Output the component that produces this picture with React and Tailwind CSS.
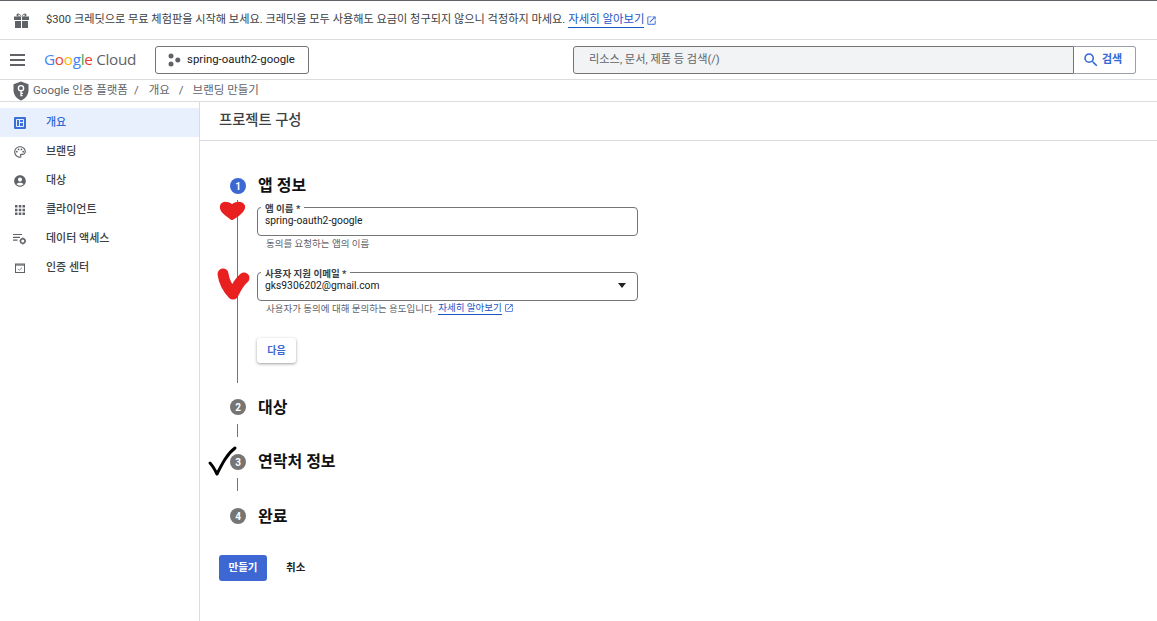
const FONT = 'font-["Roboto","Noto_Sans_CJK_KR",sans-serif]'

function OpenIcon({ className }) {
  return (
    <svg className={className} viewBox="0 0 24 24" fill="currentColor">
      <path d="M19 19H5V5h7V3H5a2 2 0 0 0-2 2v14a2 2 0 0 0 2 2h14c1.100 0 2-.900 2-2v-7h-2v7zM14 3v2h3.590l-9.830 9.830 1.410 1.410L19 6.410V10h2V3h-7z" />
    </svg>
  )
}

function SearchIcon() {
  return (
    <svg className="w-[18px] h-[18px] shrink-0" viewBox="0 0 24 24" fill="currentColor">
      <path d="M15.500 14h-.790l-.280-.270A6.470 6.470 0 0 0 16 9.500 6.500 6.500 0 1 0 9.500 16c1.610 0 3.090-.590 4.230-1.570l.270.280v.790l5 4.990L20.490 19l-4.990-5zm-6 0C7.010 14 5 11.990 5 9.500S7.010 5 9.500 5 14 7.010 14 9.500 11.990 14 9.500 14z" />
    </svg>
  )
}

function GiftIcon() {
  return (
    <svg className="w-[15px] h-[15px] text-[#5f6368]" viewBox="0 0 15 15" fill="currentColor">
      <path d="M0 3.500h7v3.600H0zM8 3.500h7v3.600H8zM1 8h6v7H1zM8 8h6v7H8z" />
      <path d="M7.500 3.500C6.300 1.200 5.300.500 4.200.500 3.100.500 2.500 1.300 2.500 2.100c0 .600.300 1.100.800 1.400h3v-.100c-.800-.200-2.200-.500-2.200-1.300 0-.300.200-.600.500-.600.800 0 1.700 1.100 2.400 2zm0 0C8.700 1.200 9.700.500 10.800.500c1.100 0 1.700.800 1.700 1.600 0 .600-.300 1.100-.800 1.400h-3v-.100c.800-.200 2.200-.500 2.200-1.300 0-.300-.200-.600-.500-.600-.800 0-1.700 1.100-2.400 2z" />
    </svg>
  )
}

function ShieldIcon() {
  return (
    <svg className="w-[18px] h-[20px] shrink-0" viewBox="0 0 18 20">
      <path d="M9 0.500 16.500 3.200V9c0 4.800-3.100 8.800-7.500 10.400C4.600 17.800 1.500 13.800 1.500 9V3.200z" fill="#5f6368" />
      <circle cx="9" cy="7.200" r="2.600" fill="none" stroke="#fff" strokeWidth="1.400" />
      <path d="M9 9.800v5.400M9 12.400h2M9 14.600h1.600" stroke="#fff" strokeWidth="1.300" fill="none" />
    </svg>
  )
}

function ProjectIcon() {
  return (
    <svg className="w-[14px] h-[14px]" viewBox="0 0 14 14" fill="#5f6368">
      <circle cx="4" cy="3" r="2.500" />
      <circle cx="4" cy="11" r="2.500" />
      <circle cx="10.800" cy="7" r="2.500" />
    </svg>
  )
}

function OverviewIcon() {
  return (
    <svg className="w-[12px] h-[12px]" viewBox="0 0 12 12">
      <rect width="12" height="12" rx="1" fill="#3d6fd8" />
      <path d="M2.500 2.500h7v7h-7zM5.500 2.500v7M5.500 5.500h4" fill="none" stroke="#e8f0fe" strokeWidth="1" />
    </svg>
  )
}

function PaletteIcon() {
  return (
    <svg className="w-[14px] h-[14px]" viewBox="0 0 24 24" fill="#5f6368">
      <path d="M12 22C6.490 22 2 17.510 2 12S6.490 2 12 2s10 4.040 10 9c0 3.310-2.690 6-6 6h-1.770c-.280 0-.500.220-.500.500 0 .120.050.230.130.330.410.470.640 1.060.640 1.670A2.500 2.500 0 0 1 12 22zm0-18c-4.410 0-8 3.590-8 8s3.590 8 8 8c.280 0 .500-.220.500-.500a.540.540 0 0 0-.140-.350c-.410-.460-.630-1.050-.630-1.650a2.500 2.500 0 0 1 2.500-2.500H16c2.210 0 4-1.790 4-4 0-3.860-3.590-7-8-7z" />
      <circle cx="6.500" cy="11.500" r="1.500" />
      <circle cx="9.500" cy="7.500" r="1.500" />
      <circle cx="14.500" cy="7.500" r="1.500" />
      <circle cx="17.500" cy="11.500" r="1.500" />
    </svg>
  )
}

function AudienceIcon() {
  return (
    <svg className="w-[14px] h-[14px]" viewBox="0 0 24 24" fill="#5f6368">
      <path d="M12 2C6.480 2 2 6.480 2 12s4.480 10 10 10 10-4.480 10-10S17.520 2 12 2zm0 4c1.930 0 3.500 1.570 3.500 3.500S13.930 13 12 13s-3.500-1.570-3.500-3.500S10.070 6 12 6zm0 14c-2.030 0-4.430-.820-6.140-2.880C7.550 15.800 9.680 15 12 15s4.450.800 6.140 2.120C16.430 19.180 14.030 20 12 20z" />
    </svg>
  )
}

function ClientsIcon() {
  return (
    <svg className="w-[12px] h-[12px]" viewBox="0 0 12 12" fill="#5f6368">
      <path d="M1 1h2.500v2.500H1zM4.800 1h2.500v2.500H4.800zM8.500 1H11v2.500H8.500zM1 4.800h2.500v2.500H1zM4.800 4.800h2.500v2.500H4.800zM8.500 4.800H11v2.500H8.500zM1 8.500h2.500V11H1zM4.800 8.500h2.500V11H4.800zM8.500 8.500H11V11H8.500z" />
    </svg>
  )
}

function DataIcon() {
  return (
    <svg className="w-[14px] h-[14px]" viewBox="0 0 14 14" fill="#5f6368">
      <path d="M0 2h9v1.100H0zM0 4.800h7v1.100H0zM0 7.600h4.500v1.100H0z" />
      <circle cx="9.800" cy="9" r="2.300" fill="none" stroke="#5f6368" strokeWidth="1.500" />
      <path d="M9.200 5.600h1.200v1.300H9.200zM9.200 11.100h1.200v1.300H9.200zM6.500 8.400h1.300v1.200H6.500zM11.800 8.400h1.300v1.200h-1.300z" />
    </svg>
  )
}

function AuthCenterIcon() {
  return (
    <svg className="w-[10px] h-[10px]" viewBox="0 0 10 10" fill="none" stroke="#5f6368">
      <rect x="0.500" y="1" width="9" height="8.500" strokeWidth="1" />
      <path d="M0.500 2h9" strokeWidth="1.200" />
      <path d="M3 5.800l1.400 1.400L7 4.600" strokeWidth="0.800" />
    </svg>
  )
}

const NAV_ITEMS = [
  { label: '개요', icon: <OverviewIcon />, active: true },
  { label: '브랜딩', icon: <PaletteIcon /> },
  { label: '대상', icon: <AudienceIcon /> },
  { label: '클라이언트', icon: <ClientsIcon /> },
  { label: '데이터 액세스', icon: <DataIcon /> },
  { label: '인증 센터', icon: <AuthCenterIcon /> },
]

function StepHeader({ n, title, active, low }) {
  return (
    <div className="flex items-center h-[28px]">
      <div className={`w-[16px] h-[16px] ml-[11px] rounded-full flex items-center justify-center text-white text-[10px] font-bold ${active ? 'bg-[#3d67d3]' : 'bg-[#757575]'}`}>
        {n}
      </div>
      <span className={`ml-[12px] text-[16px] font-bold text-[#111] leading-none ${low ? 'pt-[2px]' : ''}`}>{title}</span>
    </div>
  )
}

function Connector() {
  return <div className="ml-[18px] w-px h-[13px] bg-[#757575]" />
}

function Field({ label, value, dropdown }) {
  return (
    <div className="relative h-[29px] w-[381px] border border-[#757575] rounded-[4px] pl-[7px] pt-[6px] text-[10.300px] leading-[13px] text-[#202124]">
      <span className="absolute -top-[5px] left-[3px] bg-white px-[4px] text-[9.500px] leading-[11px] font-bold text-[#3c4043]">{label} *</span>
      {value}
      {dropdown && <span className="absolute right-[11px] top-[10px] border-x-[4.500px] border-x-transparent border-t-[5px] border-t-[#202124]" />}
    </div>
  )
}

export default function App() {
  return (
    <div className={`relative w-[1157px] h-[621px] overflow-hidden bg-white border-t border-[#5f6368] text-[#3c4043] ${FONT}`}>
      <div className="h-[39px] border-b border-[#dadce0] flex items-center">
        <div className="ml-[14px] flex"><GiftIcon /></div>
        <p className="ml-[17px] text-[11.180px] text-[#3c4043]">$300 크레딧으로 무료 체험판을 시작해 보세요. 크레딧을 모두 사용해도 요금이 청구되지 않으니 걱정하지 마세요.</p>
        <a className="ml-[3px] text-[11.400px] text-[#1a56c4] border-b border-[#1a56c4] leading-[15px]">자세히 알아보기</a>
        <OpenIcon className="ml-[2px] w-[11px] h-[11px] text-[#3367d6]" />
      </div>

      <div className="h-[40px] border-b border-[#dadce0] flex items-center">
        <div className="ml-[10px] w-[15px] flex flex-col gap-[3px]">
          <span className="h-[2px] bg-[#5f6368]" />
          <span className="h-[2px] bg-[#5f6368]" />
          <span className="h-[2px] bg-[#5f6368]" />
        </div>
        <div className="ml-[19px] w-[94px] text-[15.300px] tracking-[-0.3px] font-['Open_Sans',sans-serif] whitespace-nowrap">
          <span className="text-[#4285f4]">G</span>
          <span className="text-[#ea4335]">o</span>
          <span className="text-[#fbbc04]">o</span>
          <span className="text-[#4285f4]">g</span>
          <span className="text-[#34a853]">l</span>
          <span className="text-[#ea4335]">e</span>
          <span className="text-[#5f6368]"> Cloud</span>
        </div>
        <div className="ml-[17px] h-[28px] w-[154px] border border-[#757575] rounded-[3px] flex items-center pl-[11px] gap-[6px] text-[11.400px] text-[#202124]">
          <ProjectIcon />
          spring-oauth2-google
        </div>
        <div className="ml-[264px] h-[28px] w-[563px] flex">
          <div className="w-[501px] border border-[#757575] rounded-l-[3px] bg-[#f1f3f4] flex items-center pl-[15px] pt-px text-[11.200px] text-[#5f6368]">
            리소스, 문서, 제품 등 검색(/)
          </div>
          <div className="w-[62px] border border-l-0 border-[#9aa0a6] rounded-r-[3px] flex items-center pl-[8px] gap-[2px] pt-px text-[11px] font-bold text-[#3367d6]">
            <SearchIcon />
            검색
          </div>
        </div>
      </div>

      <div className="h-[22px] border-b border-[#dadce0] flex items-center pl-[12px] text-[11.500px] text-[#5f6368]">
        <ShieldIcon />
        <span className="ml-[3px]">Google 인증 플랫폼</span>
        <span className="ml-[6px]">/</span>
        <span className="ml-[10px]">개요</span>
        <span className="ml-[9px]">/</span>
        <span className="ml-[9px]">브랜딩 만들기</span>
      </div>

      <div className="flex h-[519px]">
        <aside className="w-[200px] shrink-0 border-r border-[#dadce0] pt-[6px]">
          {NAV_ITEMS.map((item) => (
            <div
              key={item.label}
              className={`h-[29px] flex items-center text-[11px] font-medium ${item.active ? 'bg-[#e8f0fe] text-[#3367d6]' : 'text-[#3c4043]'}`}
            >
              <span className="w-[46px] flex justify-center pr-[6px]">{item.icon}</span>
              <span className="pt-[2px]">{item.label}</span>
            </div>
          ))}
        </aside>

        <main className="flex-1">
          <div className="h-[39px] border-b border-[#dadce0] flex items-center pl-[19px] text-[14.300px] font-medium text-[#3c4043]">
            <span className="pb-px">프로젝트 구성</span>
          </div>

          <div className="pl-[19px] pt-[31px]">
            <StepHeader n="1" title="앱 정보" active />
            <div className="ml-[18px] border-l border-[#757575] pl-[19px] pt-[7px] h-[183px]">
              <Field label="앱 이름" value="spring-oauth2-google" />
              <p className="mt-[1px] ml-[9px] text-[9.500px] leading-[13px] text-[#5f6368]">동의를 요청하는 앱의 이름</p>
              <div className="mt-[22px]">
                <Field label="사용자 지원 이메일" value="gks9306202@gmail.com" dropdown />
              </div>
              <p className="mt-0 ml-[9px] flex items-center text-[9.500px] leading-[13px] text-[#5f6368]">
                사용자가 동의에 대해 문의하는 용도입니다.
                <a className="ml-[3px] text-[#1a56c4] border-b border-[#1a56c4]">자세히 알아보기</a>
                <OpenIcon className="ml-[2px] w-[10px] h-[10px] text-[#3367d6]" />
              </p>
              <button className="mt-[23px] w-[39px] h-[25px] rounded-[3px] bg-white text-[10px] font-bold text-[#3d67d3] shadow-[0_1px_3px_rgba(60,64,67,0.5)]">
                다음
              </button>
            </div>

            <div className="mt-[10px]"><StepHeader n="2" title="대상" low /></div>
            <div className="mt-[3px]"><Connector /></div>
            <div className="mt-[11px]"><StepHeader n="3" title="연락처 정보" /></div>
            <div className="mt-[2px]"><Connector /></div>
            <div className="mt-[11px]"><StepHeader n="4" title="완료" low /></div>

            <div className="mt-[25px] flex items-center">
              <button className="w-[48px] h-[26px] rounded-[3px] bg-[#3d67d3] text-white text-[10.500px] font-bold">만들기</button>
              <button className="ml-[19px] text-[10.500px] font-bold text-[#202124]">취소</button>
            </div>
          </div>
        </main>
      </div>

      {/* hand drawn marks on top of the screenshot */}
      <svg className="absolute left-[205px] top-[195px] w-[50px] h-[290px]" viewBox="0 0 50 290" fill="none">
        <path d="M27 22C20 17 16 14 17 10 18 7 24 7 27 11 30 7 36 7 38 10 39 14 34 18 27 22z" fill="#e8201f" stroke="#e8201f" strokeWidth="4" strokeLinejoin="round" />
        <path d="M18 78c1 7 5 15 10 20 3-6 6-12 11-16" stroke="#e8201f" strokeWidth="11" strokeLinecap="round" strokeLinejoin="round" />
        <path d="M5 267c3 3 5 7 7 11 5-10 10-20 18-26" stroke="#000" strokeWidth="3" strokeLinecap="round" strokeLinejoin="round" />
      </svg>
    </div>
  )
}
